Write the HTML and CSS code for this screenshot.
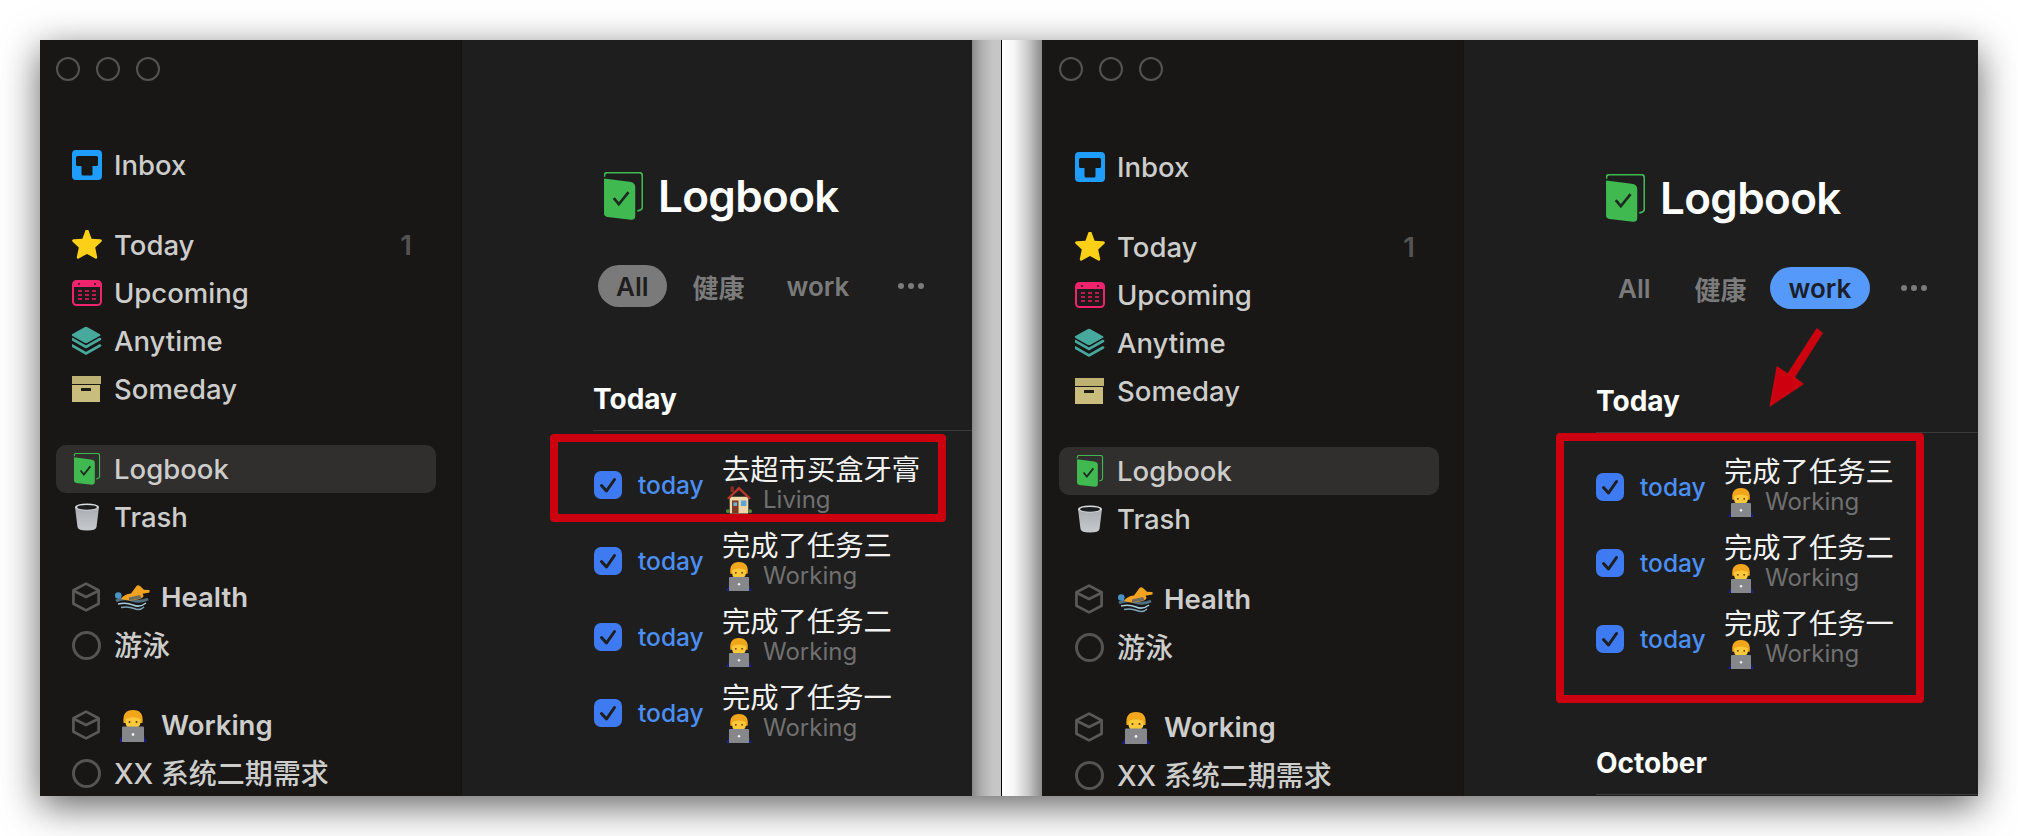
FILE: index.html
```html
<!DOCTYPE html>
<html lang="zh">
<head>
<meta charset="utf-8">
<title>Logbook</title>
<link rel="stylesheet" href="styles.css">
</head>
<body>
<svg class="sprite" aria-hidden="true">
  <defs>
    <linearGradient id="cup" x1="0" y1="0" x2="0" y2="1"><stop offset="0" stop-color="#a9adb2"/><stop offset="1" stop-color="#c6cacf"/></linearGradient>
  </defs>
  <symbol id="i-inbox" viewBox="0 0 30 30"><rect width="30" height="30" rx="4" fill="#1f9dfd"/><path d="M5.500 6H24.500Q26 6 26 7.500V14.500Q26 16 24.500 16H20.500V24Q20.500 25.500 19 25.500H11Q9.500 25.500 9.500 24V16H5.500Q4 16 4 14.500V7.500Q4 6 5.500 6Z" fill="#181716"/></symbol>
  <symbol id="i-star" viewBox="1 1.500 30 30"><path d="M16 .5Q17 .5 17.600 2L20.600 10.200 29.300 10.800Q31.800 11.200 30.400 13.200L24.200 19 26.200 28.500Q26.400 30.800 24.200 30L16 25.400 7.800 30Q5.600 30.800 5.800 28.500L7.800 19 1.600 13.200Q.2 11.200 2.700 10.800L11.400 10.200 14.400 2Q15 .5 16 .5Z" fill="#fbd016"/></symbol>
  <symbol id="i-cal" viewBox="0 0 30 26"><rect x="1" y="1" width="28" height="24" rx="3.500" fill="#1d1a1c" stroke="#f0246c" stroke-width="2"/><path d="M1 7V4Q1 1 4 1H26Q29 1 29 4V7Z" fill="#f0246c"/><circle cx="7" cy="4" r="1" fill="#3a1020"/><circle cx="23" cy="4" r="1" fill="#3a1020"/><g fill="#c3174f"><rect x="6" y="10" width="4" height="2"/><rect x="13" y="10" width="4" height="2"/><rect x="20" y="10" width="4" height="2"/><rect x="6" y="14" width="4" height="2"/><rect x="13" y="14" width="4" height="2"/><rect x="20" y="14" width="4" height="2"/><rect x="6" y="18" width="4" height="2"/><rect x="13" y="18" width="4" height="2"/><rect x="20" y="18" width="4" height="2"/></g></symbol>
  <symbol id="i-layers" viewBox="1 0 30 29"><path d="M13.500 .7Q15 0 16.500 .7L29 7.700Q30 8.500 29 9.300L16.500 16.300Q15 17 13.500 16.300L1 9.300Q0 8.500 1 7.700Z" fill="#47a99d"/><path d="M1 12.500L15 20.500 29 12.500" fill="none" stroke="#47a99d" stroke-width="2.600" stroke-linecap="round"/><path d="M1 19L15 27 29 19" fill="none" stroke="#47a99d" stroke-width="2.600" stroke-linecap="round"/></symbol>
  <symbol id="i-box" viewBox="1 0 30 26"><rect width="30" height="8" fill="#bdb274"/><rect x="1" y="9" width="28" height="17" fill="#c9bd7d"/><rect x="10" y="12" width="10" height="3" rx=".5" fill="#1d1b14"/></symbol>
  <symbol id="i-book" viewBox="0 0 116 143"><path d="M1.500 14V9Q1.500 2 9 2H105Q114 2 114 11V105Q114 113 99 116" fill="none" stroke="#40b950" stroke-width="5"/><path d="M0 19L76 29Q93 31 93 45V131Q93 143 80 142L10 134Q0 133 0 124Z" fill="#40b950"/><path d="M29 78L44 96 73 60" fill="none" stroke="#1e2a20" stroke-width="8"/></symbol>
  <symbol id="i-trash" viewBox="-2 -1 30 30"><path d="M1 4L3.500 24Q4 27.500 13 27.500T22.500 24L25 4Z" fill="url(#cup)"/><ellipse cx="13" cy="4" rx="12" ry="3.500" fill="#dcdfe2"/><ellipse cx="13" cy="4.300" rx="10" ry="2.400" fill="#1d1d1d"/></symbol>
  <symbol id="i-area" viewBox="1 0 30 31"><path d="M15 1.700L28 8.500V22.500L15 29.300 2 22.500V8.500Z" fill="none" stroke="#5a5958" stroke-width="2.800" stroke-linejoin="round"/><path d="M2 9L15 15.500 28 9" fill="none" stroke="#5a5958" stroke-width="2.800"/></symbol>
  <symbol id="i-swim" viewBox="0 0 36 27"><path d="M2 17Q10 13 18 16T34 15" fill="none" stroke="#51707f" stroke-width="3"/><path d="M4 20Q12 18 19 21T32 19" fill="none" stroke="#a8ccd9" stroke-width="1.500"/><path d="M7 23.500Q14 22 20 24.500T30 23" fill="none" stroke="#7ea6b8" stroke-width="1.500"/><path d="M7 15Q10 10 17 9.500L22.500 2Q24 .3 26 2L30 5.800 35.500 6V8.500L28.500 9.800Q31 13 27 14.500Q16 18 7 15Z" fill="#f3a21f"/><path d="M15 13.500L26 11 27.500 14Q20 16.500 15 16Z" fill="#6d6c63"/><circle cx="4.300" cy="11.500" r="3.300" fill="#4a93c6"/></symbol>
  <symbol id="i-dev" viewBox="0 0 28 33"><path d="M4.500 14Q3 1 14 1T23.500 14Z" fill="#f1a61c"/><path d="M6.500 10Q14 6.500 21.500 10V14Q21 19 14 19.500T6.500 14Z" fill="#fdc83a"/><circle cx="10.500" cy="13" r="1" fill="#5a3a10"/><circle cx="17.500" cy="13" r="1" fill="#5a3a10"/><path d="M.5 33L2.500 27V33ZM27.500 33L25.500 27V33Z" fill="#1b1fb8"/><path d="M3 18.500Q3 17.500 4 17.500H24Q25 17.500 25 18.500V33H3Z" fill="#85878b"/><circle cx="14" cy="25.500" r="1.400" fill="#eee"/></symbol>
  <symbol id="i-house" viewBox="0 0 28 29"><rect x="5" y="0" width="3.500" height="6" fill="#8b2c22"/><rect x="4" y="11" width="20" height="18" fill="#f2d8a7"/><path d="M14 0L27 12.500 25 14 14 3.800 3 14 1 12.500Z" fill="#b5362a"/><rect x="6.500" y="15" width="7" height="14" fill="#7a3a26"/><rect x="8" y="17" width="4" height="4" fill="#6fb0d8"/><rect x="16" y="15" width="6" height="6" fill="#5ea6d4"/><circle cx="2" cy="26.500" r="2" fill="#5c8a3a"/><circle cx="26" cy="26.500" r="2" fill="#5c8a3a"/></symbol>
  <symbol id="i-check" viewBox="0 0 28 28"><rect width="28" height="28" rx="7" fill="#3e7bf2"/><path d="M7.500 14.500L12.500 20 20.500 8.500" fill="none" stroke="#1e1e1e" stroke-width="3" stroke-linecap="round" stroke-linejoin="round"/></symbol>
</svg>

<main class="stage">
  <div class="frame">
    <section class="window window-left">
      <aside class="sidebar">
        <div class="lights"><span class="light"></span><span class="light"></span><span class="light"></span></div>
        <nav class="nav">
          <div class="group">
            <div class="nav-row"><svg class="ni"><use href="#i-inbox"/></svg><span>Inbox</span></div>
          </div>
          <div class="group">
            <div class="nav-row"><svg class="ni"><use href="#i-star"/></svg><span>Today</span><span class="count">1</span></div>
            <div class="nav-row"><svg class="ni"><use href="#i-cal"/></svg><span>Upcoming</span></div>
            <div class="nav-row"><svg class="ni"><use href="#i-layers"/></svg><span>Anytime</span></div>
            <div class="nav-row"><svg class="ni"><use href="#i-box"/></svg><span>Someday</span></div>
          </div>
          <div class="group">
            <div class="nav-row is-active"><svg class="ni ni-book"><use href="#i-book"/></svg><span>Logbook</span></div>
            <div class="nav-row"><svg class="ni"><use href="#i-trash"/></svg><span>Trash</span></div>
          </div>
          <div class="group">
            <div class="nav-row area"><svg class="ni"><use href="#i-area"/></svg><svg class="emoji-swim"><use href="#i-swim"/></svg><span>Health</span></div>
            <div class="nav-row"><span class="ring"></span><span class="cjk">游泳</span></div>
          </div>
          <div class="group">
            <div class="nav-row area"><svg class="ni"><use href="#i-area"/></svg><svg class="emoji-dev"><use href="#i-dev"/></svg><span>Working</span></div>
            <div class="nav-row"><span class="ring"></span><span class="cjk">XX 系统二期需求</span></div>
          </div>
        </nav>
      </aside>
      <div class="content">
        <header class="title"><svg class="title-icon"><use href="#i-book"/></svg><h1>Logbook</h1></header>
        <div class="chips">
          <span class="chip chip-all">All</span><span class="chip chip-cjk">健康</span><span class="chip">work</span><span class="dots"><i></i><i></i><i></i></span>
        </div>
        <h2 class="section">Today</h2>
        <ul class="tasks">
          <li class="task"><svg class="check"><use href="#i-check"/></svg><span class="when">today</span><div class="task-text"><div class="task-title">去超市买盒牙膏</div><div class="task-sub"><svg class="sub-icon"><use href="#i-house"/></svg>Living</div></div></li>
          <li class="task"><svg class="check"><use href="#i-check"/></svg><span class="when">today</span><div class="task-text"><div class="task-title">完成了任务三</div><div class="task-sub"><svg class="sub-icon"><use href="#i-dev"/></svg>Working</div></div></li>
          <li class="task"><svg class="check"><use href="#i-check"/></svg><span class="when">today</span><div class="task-text"><div class="task-title">完成了任务二</div><div class="task-sub"><svg class="sub-icon"><use href="#i-dev"/></svg>Working</div></div></li>
          <li class="task"><svg class="check"><use href="#i-check"/></svg><span class="when">today</span><div class="task-text"><div class="task-title">完成了任务一</div><div class="task-sub"><svg class="sub-icon"><use href="#i-dev"/></svg>Working</div></div></li>
        </ul>
      </div>
      <div class="mark mark-left"></div>
    </section>

    <div class="gutter"></div>

    <section class="window window-right">
      <aside class="sidebar">
        <div class="lights"><span class="light"></span><span class="light"></span><span class="light"></span></div>
        <nav class="nav">
          <div class="group">
            <div class="nav-row"><svg class="ni"><use href="#i-inbox"/></svg><span>Inbox</span></div>
          </div>
          <div class="group">
            <div class="nav-row"><svg class="ni"><use href="#i-star"/></svg><span>Today</span><span class="count">1</span></div>
            <div class="nav-row"><svg class="ni"><use href="#i-cal"/></svg><span>Upcoming</span></div>
            <div class="nav-row"><svg class="ni"><use href="#i-layers"/></svg><span>Anytime</span></div>
            <div class="nav-row"><svg class="ni"><use href="#i-box"/></svg><span>Someday</span></div>
          </div>
          <div class="group">
            <div class="nav-row is-active"><svg class="ni ni-book"><use href="#i-book"/></svg><span>Logbook</span></div>
            <div class="nav-row"><svg class="ni"><use href="#i-trash"/></svg><span>Trash</span></div>
          </div>
          <div class="group">
            <div class="nav-row area"><svg class="ni"><use href="#i-area"/></svg><svg class="emoji-swim"><use href="#i-swim"/></svg><span>Health</span></div>
            <div class="nav-row"><span class="ring"></span><span class="cjk">游泳</span></div>
          </div>
          <div class="group">
            <div class="nav-row area"><svg class="ni"><use href="#i-area"/></svg><svg class="emoji-dev"><use href="#i-dev"/></svg><span>Working</span></div>
            <div class="nav-row"><span class="ring"></span><span class="cjk">XX 系统二期需求</span></div>
          </div>
        </nav>
      </aside>
      <div class="content">
        <header class="title"><svg class="title-icon"><use href="#i-book"/></svg><h1>Logbook</h1></header>
        <div class="chips">
          <span class="chip">All</span><span class="chip chip-cjk">健康</span><span class="chip chip-work">work</span><span class="dots"><i></i><i></i><i></i></span>
        </div>
        <h2 class="section">Today</h2>
        <ul class="tasks">
          <li class="task"><svg class="check"><use href="#i-check"/></svg><span class="when">today</span><div class="task-text"><div class="task-title">完成了任务三</div><div class="task-sub"><svg class="sub-icon"><use href="#i-dev"/></svg>Working</div></div></li>
          <li class="task"><svg class="check"><use href="#i-check"/></svg><span class="when">today</span><div class="task-text"><div class="task-title">完成了任务二</div><div class="task-sub"><svg class="sub-icon"><use href="#i-dev"/></svg>Working</div></div></li>
          <li class="task"><svg class="check"><use href="#i-check"/></svg><span class="when">today</span><div class="task-text"><div class="task-title">完成了任务一</div><div class="task-sub"><svg class="sub-icon"><use href="#i-dev"/></svg>Working</div></div></li>
        </ul>
        <h2 class="section section-next">October</h2>
      </div>
      <div class="mark mark-right"></div>
      <svg class="arrow" viewBox="0 0 70 90"><path d="M54.700 3L61 8 33 52.300 42 59 7.300 82 14.700 41 25.700 48.300Z" fill="#cc000f"/></svg>
    </section>
  </div>
</main>
</body>
</html>
```

FILE: styles.css
```css
* { box-sizing: border-box; }
html, body { margin: 0; padding: 0; background: #fff; }
body {
  width: 2018px;
  height: 836px;
  overflow: hidden;
  font-family: Inter, "Noto Sans CJK SC", sans-serif;
}
.sprite { display: block; width: 0; height: 0; overflow: hidden; }
symbol { overflow: visible; }
.stage { height: 836px; padding: 40px; }

.frame {
  display: flex;
  height: 756px;
  box-shadow: 0 10px 36px rgba(0, 0, 0, .62);
}
.window {
  position: relative;
  display: flex;
  height: 756px;
  background: #1e1e1e;
}
.window-left { flex: 0 0 932px; }
.window-right { flex: 0 0 936px; }
.gutter {
  flex: 0 0 70px;
  background: linear-gradient(90deg,
    #8a8a8a 0, #b0b0b0 10px, #c4c4c4 20px, #c8c8c8 29px,
    #000 29px, #000 30px,
    #fff 30px, #f6f6f6 42px, #cfcfcf 55px, #8c8c8c 70px);
}

.sidebar {
  flex: 0 0 422px;
  height: 756px;
  overflow: hidden;
  padding: 17px 25px 0 16px;
  background: #181716;
  border-right: 1px solid #141413;
}
.window-right .sidebar { padding-left: 17px; padding-right: 24px; }
.lights { display: flex; gap: 16px; }
.light { width: 24px; height: 24px; border: 2px solid #545352; border-radius: 50%; }
.nav { margin-top: 60px; }
.window-right .nav { margin-top: 62px; }
.group { margin-bottom: 32px; }
.nav-row {
  display: flex;
  align-items: center;
  height: 48px;
  padding: 0 24px 0 16px;
  border-radius: 10px;
  color: #cdcdcb;
  font-size: 27.500px;
  font-weight: 500;
  white-space: nowrap;
}
.nav-row.is-active { background: #302f2e; }
.area { font-weight: 600; }
.cjk { padding-bottom: 3px; font-size: 28px; }
.ni { flex: 0 0 30px; width: 30px; height: 30px; margin-right: 12px; }
.ni-book { height: 32px; }
.ring { flex: 0 0 29px; width: 29px; height: 29px; margin-right: 13px; border: 3px solid #555453; border-radius: 50%; }
.emoji-swim { width: 36px; height: 27px; margin-right: 11px; }
.emoji-dev { width: 28px; height: 33px; margin: 0 14px 0 5px; }
.count { margin-left: auto; color: #555453; font-weight: 600; }

.content { flex: 1; min-width: 0; height: 756px; overflow: hidden; padding: 126px 0 0 132px; }
.window-right .content { padding-top: 128px; }
.title { display: flex; align-items: center; gap: 15px; height: 60px; padding-left: 10px; }
.title-icon { width: 39px; height: 48px; }
h1 { margin: 0; color: #fff; font-size: 44px; font-weight: 600; letter-spacing: -.65px; }
.chips { display: flex; align-items: center; gap: 7px; height: 42px; margin: 39px 0 0 4px; }
.chip {
  display: flex;
  align-items: center;
  height: 42px;
  padding: 0 18px;
  border-radius: 21px;
  color: #7b7b7b;
  font-size: 26px;
  font-weight: 600;
}
.chip-cjk { padding: 0 17px 0 19px; }
.chip-all { background: #7a7a7a; color: #1e1e1e; }
.chip-work { padding: 0 19px; margin-left: -1px; background: #5599fb; color: #1a1f2b; }
.dots { display: flex; gap: 4px; margin-left: 24px; }
.dots i { width: 6px; height: 6px; border-radius: 50%; background: #7b7b7b; }

.section {
  margin: 76px 0 0;
  padding-bottom: 15px;
  border-bottom: 1px solid #3a3a3a;
  color: #fff;
  font-size: 28px;
  font-weight: 700;
  line-height: 32px;
}
.window-left .section { margin-left: -1px; }
.section-next { margin-top: 70px; }
.tasks { margin: 16px 0 0; padding: 0; list-style: none; }
.task { display: flex; align-items: center; height: 76px; }
.check { flex: 0 0 28px; width: 28px; height: 28px; margin-right: 16px; }
.when { width: 64px; margin-right: 20px; color: #4b8ff5; font-size: 24.500px; font-weight: 500; }
.task-title { color: #f2f2f2; font-size: 28.300px; line-height: 28px; white-space: nowrap; }
.task-sub {
  display: flex;
  align-items: center;
  height: 29px;
  margin-top: 1px;
  color: #707070;
  font-size: 24px;
}
.sub-icon { width: 26px; height: 30px; margin: 0 11px 0 4px; }

.mark { position: absolute; border: 8px solid #cc000f; border-radius: 4px; }
.mark-left { left: 510px; top: 394px; width: 396px; height: 88px; }
.mark-right { left: 514px; top: 393px; width: 368px; height: 270px; }
.arrow { position: absolute; left: 720px; top: 285px; width: 70px; height: 90px; overflow: visible; }
```
